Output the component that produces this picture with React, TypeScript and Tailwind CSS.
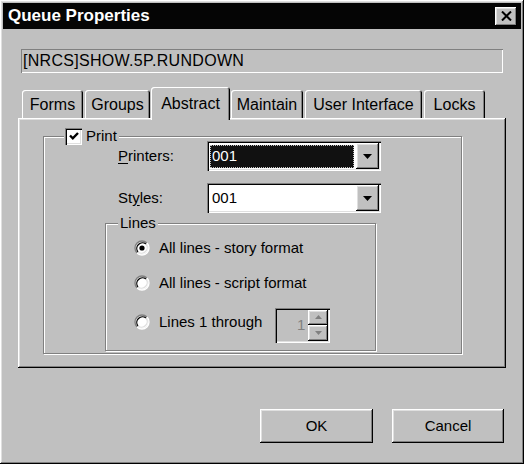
import React from "react";

const raised =
  "shadow-[inset_-1px_-1px_#000,inset_1px_1px_#fff,inset_-2px_-2px_#808080,inset_2px_2px_#dfdfdf]";
const sunken =
  "shadow-[inset_1px_1px_#808080,inset_2px_2px_#000,inset_-1px_-1px_#fff,inset_-2px_-2px_#dfdfdf]";
const etched =
  "border border-[#808080] shadow-[inset_1px_1px_#fff,1px_1px_#fff]";

const tabs = [
  { label: "Forms", w: "w-[61px]" },
  { label: "Groups", w: "w-[65px]" },
  { label: "Abstract", w: "w-[79px]", active: true },
  { label: "Maintain", w: "w-[72px]" },
  { label: "User Interface", w: "w-[117px]" },
  { label: "Locks", w: "w-[61px]" },
];

const DownArrow = () => (
  <svg width="9" height="5" viewBox="0 0 9 5">
    <path d="M0 0H9L4.5 5Z" fill="#000" />
  </svg>
);

const Radio = ({ checked }: { checked?: boolean }) => (
  <svg width="16" height="16" viewBox="0 0 16 16">
    <circle cx="8" cy="8" r="6.5" fill="#fff" />
    <path d="M3.05 12.95A7 7 0 0 1 12.95 3.05" stroke="#808080" strokeWidth="1.3" fill="none" />
    <path d="M12.95 3.05A7 7 0 0 1 3.05 12.95" stroke="#fff" strokeWidth="1.3" fill="none" />
    <path d="M4 12A5.7 5.7 0 0 1 12 4" stroke="#000" strokeWidth="1.3" fill="none" />
    <path d="M12 4A5.7 5.7 0 0 1 4 12" stroke="#dfdfdf" strokeWidth="1.3" fill="none" />
    {checked && <circle cx="8" cy="8" r="2.6" fill="#000" />}
  </svg>
);

const Combo = ({ focused }: { focused?: boolean }) => (
  <div className={`relative w-[174px] h-[30px] bg-white ${sunken} flex items-center pl-[3px] pr-[2px]`}>
    <div
      className={`flex-1 h-[23px] flex items-center pl-[2px] text-[15px] ${
        focused ? "bg-[#111] text-white outline-1 outline-dotted outline-[#c0c0c0] -outline-offset-1" : "text-black"
      }`}
    >
      001
    </div>
    <div className={`ml-[2px] w-[23px] h-[26px] bg-[#c0c0c0] ${raised} flex items-center justify-center`}>
      <DownArrow />
    </div>
  </div>
);

export default function App() {
  return (
    <div
      className={`w-[524px] h-[464px] bg-[#c0c0c0] p-[3px] flex flex-col ${raised} text-black`}
      style={{ fontFamily: '"Liberation Sans", Arial, sans-serif' }}
    >
      {/* title bar */}
      <div className="h-[26px] bg-[#050505] flex items-center justify-between pl-[5px] pr-[4px]">
        <span className="text-white font-bold text-[17px]">Queue Properties</span>
        <div className={`w-[22px] h-[19px] bg-[#c0c0c0] ${raised} flex items-center justify-center`}>
          <svg width="11" height="10" viewBox="0 0 11 10">
            <path d="M1 0.5L10 9.5M10 0.5L1 9.5" stroke="#000" strokeWidth="2" />
          </svg>
        </div>
      </div>

      {/* queue path */}
      <div className="ml-[18px] mt-[20px] w-[482px] h-[24px] shadow-[inset_1px_1px_#808080,inset_-1px_-1px_#fff] flex items-center pl-[2px] text-[16px] tracking-[0.3px]">
        [NRCS]SHOW.5P.RUNDOWN
      </div>

      {/* tabs */}
      <div className="ml-[15px] mt-[14px] w-[488px] flex flex-col">
        <div className="relative z-10 h-[33px] -mb-[2px] flex items-end gap-[2px] pl-[4px]">
          {tabs.map((t) =>
            t.active ? (
              <div
                key={t.label}
                className={`${t.w} -mx-[1px] h-[33px] bg-[#c0c0c0] rounded-t-[3px] shadow-[inset_1px_1px_#fff,inset_-1px_0_#000,inset_-2px_0_#808080] flex justify-center pt-[5px] text-[16px]`}
              >
                {t.label}
              </div>
            ) : (
              <div
                key={t.label}
                className={`${t.w} h-[28px] mb-[2px] rounded-t-[3px] shadow-[inset_1px_1px_#fff,inset_-1px_0_#000,inset_-2px_0_#808080] flex items-center justify-center pt-[2px] text-[16px]`}
              >
                {t.label}
              </div>
            )
          )}
        </div>

        {/* panel */}
        <div className={`h-[250px] ${raised} pl-[25px] pt-[18px]`}>
          <div className={`relative w-[419px] h-[218px] ${etched} flex flex-col`}>
            <div className="absolute left-[20px] -top-[10px] flex items-center gap-[4px] bg-[#c0c0c0] pl-[1px] pr-[2px]">
              <div className={`w-[17px] h-[17px] bg-white ${sunken} flex items-center justify-center`}>
                <svg width="10" height="10" viewBox="0 0 10 10">
                  <path d="M1 4.5L3.8 7.3L9 2" stroke="#000" strokeWidth="2.4" fill="none" />
                </svg>
              </div>
              <span className="text-[15px] leading-[18px]">Print</span>
            </div>

            <div className="flex items-center pl-[74px] mt-[4px]">
              <span className="w-[89px] text-[15px]">
                <span className="underline underline-offset-2">P</span>rinters:
              </span>
              <Combo focused />
            </div>
            <div className="flex items-center pl-[74px] mt-[12px]">
              <span className="w-[89px] text-[15px]">
                St<span className="underline underline-offset-2">y</span>les:
              </span>
              <Combo />
            </div>

            {/* lines group */}
            <div className={`relative ml-[61px] mt-[10px] w-[271px] h-[128px] ${etched} flex flex-col pl-[28px] pt-[14px]`}>
              <span className="absolute left-[12px] -top-[10px] bg-[#c0c0c0] px-[2px] text-[15px] leading-[18px]">
                Lines
              </span>
              <div className="flex items-center gap-[9px] h-[20px]">
                <Radio checked />
                <span className="text-[15px]">All lines - story format</span>
              </div>
              <div className="flex items-center gap-[9px] h-[20px] mt-[15px]">
                <Radio />
                <span className="text-[15px]">All lines - script format</span>
              </div>
              <div className="flex items-center gap-[9px] h-[20px] mt-[19px]">
                <Radio />
                <span className="text-[15px]">Lines 1 through</span>
                <div className={`ml-[4px] mt-[6px] w-[55px] h-[35px] ${sunken} flex items-center pl-[2px] pr-[2px]`}>
                  <span className="flex-1 text-right pr-[3px] text-[15px] text-[#808080]">1</span>
                  <div className="flex flex-col w-[20px] h-[31px]">
                    <div className={`flex-1 bg-[#c0c0c0] ${raised} flex items-center justify-center`}>
                      <svg width="7" height="4" viewBox="0 0 7 4">
                        <path d="M0 4H7L3.5 0Z" fill="#808080" />
                      </svg>
                    </div>
                    <div className={`flex-1 bg-[#c0c0c0] ${raised} flex items-center justify-center`}>
                      <svg width="7" height="4" viewBox="0 0 7 4">
                        <path d="M0 0H7L3.5 4Z" fill="#808080" />
                      </svg>
                    </div>
                  </div>
                </div>
              </div>
            </div>
          </div>
        </div>
      </div>

      {/* buttons */}
      <div className="mt-[41px] flex justify-end gap-[19px] pr-[17px]">
        <div className={`w-[113px] h-[34px] ${raised} flex items-center justify-center text-[15px]`}>OK</div>
        <div className={`w-[112px] h-[34px] ${raised} flex items-center justify-center text-[15px]`}>Cancel</div>
      </div>
    </div>
  );
}
